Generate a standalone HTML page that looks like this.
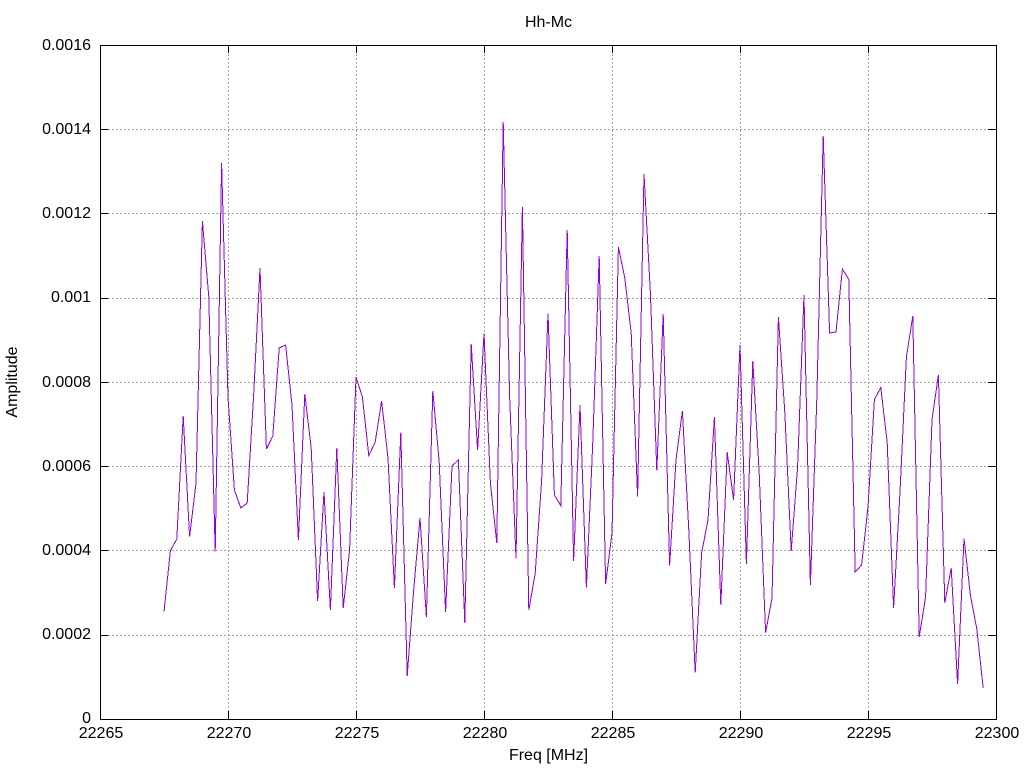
<!DOCTYPE html>
<html>
<head>
<meta charset="utf-8">
<title>Hh-Mc</title>
<style>
html,body{margin:0;padding:0;background:#fff;}
svg{display:block;}
text{font-family:"Liberation Sans",sans-serif;font-size:16px;fill:#000;}
</style>
</head>
<body>
<svg width="1024" height="768" viewBox="0 0 1024 768" xmlns="http://www.w3.org/2000/svg">
<rect width="1024" height="768" fill="#fff"/>
<g stroke="#a0a0a0" stroke-width="1" stroke-dasharray="2 2" shape-rendering="crispEdges" fill="none">
<path d="M108 635.5H988M108 550.5H988M108 466.5H988M108 382.5H988M108 298.5H988M108 213.5H988M108 129.5H988"/>
<path d="M228.5 54V711M356.5 54V711M484.5 54V711M612.5 54V711M740.5 54V711M868.5 54V711"/>
</g>
<g stroke="#000" stroke-width="1" shape-rendering="crispEdges" fill="none">
<path d="M100 635.5H108M100 550.5H108M100 466.5H108M100 382.5H108M100 298.5H108M100 213.5H108M100 129.5H108"/>
<path d="M997 635.5H988M997 550.5H988M997 466.5H988M997 382.5H988M997 298.5H988M997 213.5H988M997 129.5H988"/>
<path d="M228.5 719V711M356.5 719V711M484.5 719V711M612.5 719V711M740.5 719V711M868.5 719V711"/>
<path d="M228.5 45V53M356.5 45V53M484.5 45V53M612.5 45V53M740.5 45V53M868.5 45V53"/>
<rect x="100.5" y="45.5" width="896" height="674"/>
</g>
<polyline fill="none" stroke="#9400d3" stroke-width="1" shape-rendering="crispEdges" points="164,611.7 170.4,550.7 176.8,539 183.2,416 189.6,536.7 196,483 202.4,221 208.8,297 215.2,551.7 221.6,163 228,397 234.4,490 240.8,508 247.2,503 253.6,396 260,268 266.4,449 272.8,436 279.2,348 285.6,345 292,405 298.4,540 304.8,394 311.2,448 317.6,601 324,492 330.4,610 336.8,448 343.2,608 349.6,550 356,377 362.4,397 368.8,455.6 375.2,442 381.6,401 388,458 394.4,588 400.8,432.6 407.2,676 413.6,591 420,518 426.4,617 432.8,391 439.2,462 445.6,612 452,466 458.4,460 464.8,623 471.2,344 477.6,450 484,333.6 490.4,483 496.8,543 503.2,122 509.6,395.5 516,558.7 522.4,207 528.8,610 535.2,573.5 541.6,481 548,313.6 554.4,495 560.8,505.6 567.2,230 573.6,561 580,405 586.4,587.7 592.8,441.7 599.2,256 605.6,584 612,533 618.4,247 624.8,278 631.2,333 637.6,496.7 644,174 650.4,293 656.8,470.7 663.2,314 669.6,565.7 676,460 682.4,411 688.8,530 695.2,672.7 701.6,553 708,520 714.4,417 720.8,605 727.2,452.3 733.6,500 740,345 746.4,564 752.8,361 759.2,473 765.6,632.7 772,598 778.4,317 784.8,412 791.2,551 797.6,467 804,295 810.4,585 816.8,399.5 823.2,136 829.6,333 836,332 842.4,269 848.8,279.5 855.2,572 861.6,565 868,507 874.4,399.5 880.8,387.5 887.2,442.5 893.6,608 900,492 906.4,357 912.8,316 919.2,637 925.6,597 932,420 938.4,375 944.8,603 951.2,568 957.6,684 964,538.5 970.4,595 976.8,629 983.2,688"/>
<g text-anchor="end">
<text x="91" y="723">0</text>
<text x="91" y="639">0.0002</text>
<text x="91" y="555">0.0004</text>
<text x="91" y="471">0.0006</text>
<text x="91" y="387">0.0008</text>
<text x="91" y="302">0.001</text>
<text x="91" y="218">0.0012</text>
<text x="91" y="134">0.0014</text>
<text x="91" y="50">0.0016</text>
</g>
<g text-anchor="middle">
<text x="101" y="738">22265</text>
<text x="229" y="738">22270</text>
<text x="357" y="738">22275</text>
<text x="485" y="738">22280</text>
<text x="613" y="738">22285</text>
<text x="741" y="738">22290</text>
<text x="869" y="738">22295</text>
<text x="997" y="738">22300</text>
<text x="548.5" y="760">Freq [MHz]</text>
<text x="548.5" y="27">Hh-Mc</text>
<text transform="translate(17 382) rotate(-90)">Amplitude</text>
</g>
</svg>
</body>
</html>
